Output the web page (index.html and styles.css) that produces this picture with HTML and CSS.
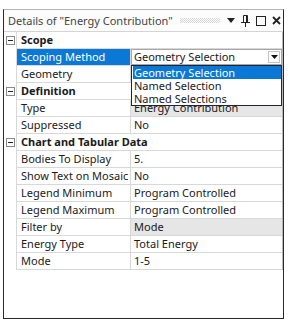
FILE: index.html
```html
<!DOCTYPE html>
<html>
<head>
<meta charset="utf-8">
<link rel="stylesheet" href="styles.css">
</head>
<body>
<div class="panel">
  <div class="titlebar">
    <span class="title">Details of "Energy Contribution"</span>
    <span class="grip"></span>
    <span class="tb-icons">
      <svg class="ic-drop" width="8" height="5" viewBox="0 0 8 5"><path d="M0 0h8l-4 5z" fill="#222"/></svg>
      <svg class="ic-pin" width="9" height="12" viewBox="0 0 9 12"><path d="M2.5 0.5v7M6.5 0.5v7M2.5 0.5h4M0 7.5h9M4.5 7.5v4.5M5.5 0.5v7" stroke="#222" stroke-width="1" fill="none"/></svg>
      <svg class="ic-max" width="10" height="10" viewBox="0 0 10 10"><rect x="0.5" y="0.5" width="9" height="9" fill="none" stroke="#222"/></svg>
      <svg class="ic-close" width="9" height="9" viewBox="0 0 9 9"><path d="M1 1l7 7M8 1l-7 7" stroke="#222" stroke-width="1.8"/></svg>
    </span>
  </div>
  <div class="grid">
    <div class="row cat"><span class="exp"><i></i></span><span class="cat-name">Scope</span></div>
    <div class="row"><span class="gut"></span><span class="name sel">Scoping Method</span><span class="val combo"><span class="combo-box">Geometry Selection<span class="arrow"><svg width="7" height="4" viewBox="0 0 7 4"><path d="M0 0h7l-3.5 4z" fill="#111"/></svg></span></span></span></div>
    <div class="row"><span class="gut"></span><span class="name">Geometry</span><span class="val"></span></div>
    <div class="row cat"><span class="exp"><i></i></span><span class="cat-name">Definition</span></div>
    <div class="row"><span class="gut"></span><span class="name">Type</span><span class="val ro">Energy Contribution</span></div>
    <div class="row"><span class="gut"></span><span class="name">Suppressed</span><span class="val">No</span></div>
    <div class="row cat"><span class="exp"><i></i></span><span class="cat-name">Chart and Tabular Data</span></div>
    <div class="row"><span class="gut"></span><span class="name">Bodies To Display</span><span class="val">5.</span></div>
    <div class="row"><span class="gut"></span><span class="name">Show Text on Mosaic</span><span class="val">No</span></div>
    <div class="row"><span class="gut"></span><span class="name">Legend Minimum</span><span class="val">Program Controlled</span></div>
    <div class="row"><span class="gut"></span><span class="name">Legend Maximum</span><span class="val">Program Controlled</span></div>
    <div class="row"><span class="gut"></span><span class="name">Filter by</span><span class="val ro">Mode</span></div>
    <div class="row"><span class="gut"></span><span class="name">Energy Type</span><span class="val">Total Energy</span></div>
    <div class="row"><span class="gut"></span><span class="name">Mode</span><span class="val">1-5</span></div>
    <ul class="dropdown">
      <li class="hi">Geometry Selection</li>
      <li>Named Selection</li>
      <li>Named Selections</li>
    </ul>
  </div>
</div>
</body>
</html>
```
FILE: styles.css
```css
html, body { margin: 0; padding: 0; background: #fff; }
body { width: 290px; height: 323px; font-family: "Noto Sans", "Open Sans", sans-serif; font-size: 11px; color: #1a1a1a; }
.panel {
  position: absolute; left: 3px; top: 9px; width: 279px; height: 308px;
  border: 1px solid #2a2a2a; border-top-color: #b4b4b4; background: #fff;
}
.titlebar {
  height: 21px; display: flex; align-items: center; padding: 0 2px 0 4px;
  border-bottom: 1px solid #d4d4d4; background: #fcfcfc;
}
.title { font-size: 11px; color: #444; white-space: nowrap; }
.grip {
  flex: 1; height: 5px; margin: 0 7px 0 7px;
  background-image:
    linear-gradient(45deg, #fcfcfc 25%, transparent 25%, transparent 75%, #fcfcfc 75%),
    linear-gradient(45deg, #fcfcfc 25%, transparent 25%, transparent 75%, #fcfcfc 75%);
  background-color: #d6d6d6;
  background-size: 2px 2px;
  background-position: 0 0, 1px 1px;
}
.tb-icons { display: flex; align-items: center; gap: 6px; }
.grid { position: relative; border-right: 1px solid #b8b8b8; width: 278px; }
.row { display: flex; height: 17px; border-bottom: 1px solid #d8d8d8; box-sizing: border-box; margin-left: 12px; }
.row .gut, .row .exp { width: 12px; flex: none; margin-left: -12px; background: #fff; border-bottom: 1px solid #fff; margin-bottom: -1px; }
.exp { display: flex; align-items: center; justify-content: center; }
.exp i {
  display: block; width: 7px; height: 7px; border: 1px solid #8a8a8a; position: relative; background: #fff;
}
.exp i::after { content: ""; position: absolute; left: 1px; right: 1px; top: 3px; height: 1px; background: #222; }
.cat-name { flex: 1; font-weight: bold; padding-left: 4px; border-left: 1px solid #d8d8d8; line-height: 16px; }
.name {
  width: 109px; flex: none; padding-left: 4px; border-left: 1px solid #d8d8d8; border-right: 1px solid #d8d8d8;
  line-height: 16px; white-space: nowrap; overflow: hidden;
}
.name.sel { background: #0a78d4; color: #fff; }
.val { flex: 1; padding-left: 3px; line-height: 16px; white-space: nowrap; position: relative; }
.val.ro { background: #e6e6e6; }
.val.combo { padding: 0; display: flex; }
.combo-box { flex: 1; border: 1px solid #a6a6a6; padding-left: 2px; line-height: 14px; position: relative; }
.arrow {
  position: absolute; right: 1px; top: 1px; width: 10px; height: 10px; border: 1px solid #c4c4c4;
  display: flex; align-items: center; justify-content: center; background: #fdfdfd;
}
.dropdown {
  position: absolute; left: 127px; top: 33px; width: 149px; margin: 0; padding: 0; list-style: none;
  border: 1px solid #22223a; background: #fff;
}
.dropdown li { height: 13px; line-height: 13px; padding-left: 2px; white-space: nowrap; }
.dropdown li.hi { background: #0a78d4; color: #fff; margin-left: 1px; padding-left: 1px; }
```
